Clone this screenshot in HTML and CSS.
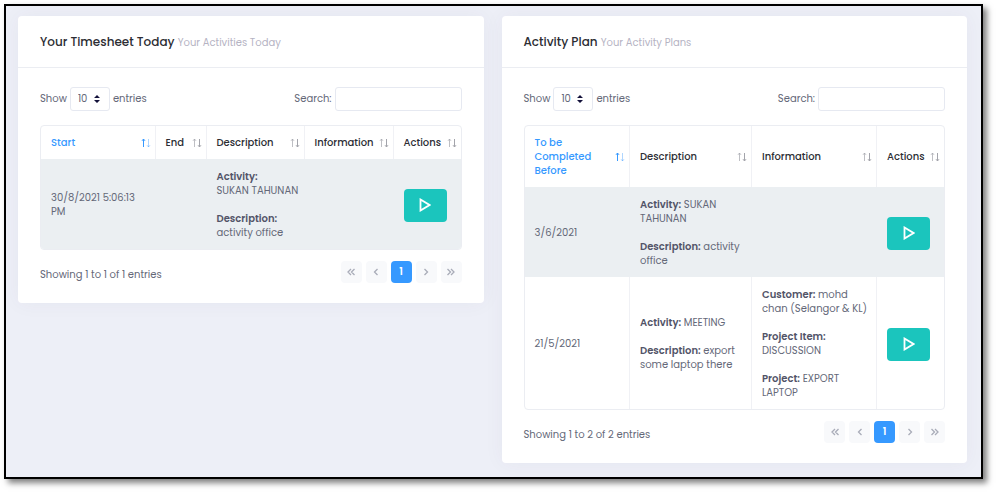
FILE: index.html
```html
<!DOCTYPE html>
<html lang="en">
<head>
    <meta charset="UTF-8">
    <meta name="viewport" content="width=device-width, initial-scale=1.0">
    <title>Timesheet</title>
    <link rel="stylesheet" href="styles.css">
</head>
<body>
    <!-- shared icons -->
    <svg class="icons" width="0" height="0" aria-hidden="true">
        <symbol id="sort" viewBox="0 0 10 10">
            <path class="up" d="M2.5 9V1M1 2.8L2.5 1L4 2.8"/>
            <path class="down" d="M7.5 1V9M6 7.2L7.5 9L9 7.2"/>
        </symbol>
        <symbol id="sort-asc" viewBox="0 0 10 10">
            <path d="M2.5 9V1M1 2.8L2.5 1L4 2.8"/>
            <path d="M7.5 1V9M6 7.2L7.5 9L9 7.2" opacity="0.4"/>
        </symbol>
        <symbol id="play" viewBox="0 0 12 14">
            <path d="M1.5 1.5L10.5 7L1.5 12.5Z" fill="none" stroke="#fff" stroke-width="1.8"/>
        </symbol>
        <symbol id="caret" viewBox="0 0 6 8">
            <path d="M3 0L6 3H0ZM3 8L0 5H6Z" fill="#13113a"/>
        </symbol>
        <symbol id="prev" viewBox="0 0 10 10">
            <path d="M6.5 2L3.5 5L6.5 8"/>
        </symbol>
        <symbol id="next" viewBox="0 0 10 10">
            <path d="M3.5 2L6.5 5L3.5 8"/>
        </symbol>
        <symbol id="first" viewBox="0 0 10 10">
            <path d="M5 2L2 5L5 8M8.5 2L5.5 5L8.5 8"/>
        </symbol>
        <symbol id="last" viewBox="0 0 10 10">
            <path d="M1.5 2L4.5 5L1.5 8M5 2L8 5L5 8"/>
        </symbol>
    </svg>

    <main class="frame">
        <section class="card">
            <header class="card-header">
                <h2>Your Timesheet Today <small>Your Activities Today</small></h2>
            </header>
            <div class="card-body">
                <div class="controls">
                    <label class="length">Show
                        <span class="select">
                            <select name="timesheet_length">
                                <option>10</option>
                                <option>25</option>
                                <option>50</option>
                            </select>
                            <svg><use href="#caret"/></svg>
                        </span>
                        entries
                    </label>
                    <label class="search">Search: <input type="search" name="timesheet_search"></label>
                </div>
                <table class="timesheet">
                    <thead>
                        <tr>
                            <th class="sorted"><div>Start <svg><use href="#sort-asc"/></svg></div></th>
                            <th><div>End <svg><use href="#sort"/></svg></div></th>
                            <th><div>Description <svg><use href="#sort"/></svg></div></th>
                            <th><div>Information <svg><use href="#sort"/></svg></div></th>
                            <th><div>Actions <svg><use href="#sort"/></svg></div></th>
                        </tr>
                    </thead>
                    <tbody>
                        <tr>
                            <td>30/8/2021 5:06:13<br>PM</td>
                            <td></td>
                            <td><b>Activity:</b><br>SUKAN TAHUNAN<br><br><b>Description:</b><br>activity office</td>
                            <td></td>
                            <td><button type="button" class="play" aria-label="Start"><svg><use href="#play"/></svg></button></td>
                        </tr>
                    </tbody>
                </table>
                <div class="table-footer">
                    <span>Showing 1 to 1 of 1 entries</span>
                    <nav class="pages">
                        <button type="button" aria-label="First" disabled><svg><use href="#first"/></svg></button>
                        <button type="button" aria-label="Previous" disabled><svg><use href="#prev"/></svg></button>
                        <button type="button" class="active">1</button>
                        <button type="button" aria-label="Next" disabled><svg><use href="#next"/></svg></button>
                        <button type="button" aria-label="Last" disabled><svg><use href="#last"/></svg></button>
                    </nav>
                </div>
            </div>
        </section>

        <section class="card">
            <header class="card-header">
                <h2>Activity Plan <small>Your Activity Plans</small></h2>
            </header>
            <div class="card-body">
                <div class="controls">
                    <label class="length">Show
                        <span class="select">
                            <select name="plan_length">
                                <option>10</option>
                                <option>25</option>
                                <option>50</option>
                            </select>
                            <svg><use href="#caret"/></svg>
                        </span>
                        entries
                    </label>
                    <label class="search">Search: <input type="search" name="plan_search"></label>
                </div>
                <table class="plan">
                    <thead>
                        <tr>
                            <th class="sorted"><div>To be Completed Before <svg><use href="#sort-asc"/></svg></div></th>
                            <th><div>Description <svg><use href="#sort"/></svg></div></th>
                            <th><div>Information <svg><use href="#sort"/></svg></div></th>
                            <th><div>Actions <svg><use href="#sort"/></svg></div></th>
                        </tr>
                    </thead>
                    <tbody>
                        <tr>
                            <td>3/6/2021</td>
                            <td><b>Activity:</b> SUKAN<br>TAHUNAN<br><br><b>Description:</b> activity<br>office</td>
                            <td></td>
                            <td><button type="button" class="play" aria-label="Start"><svg><use href="#play"/></svg></button></td>
                        </tr>
                        <tr>
                            <td>21/5/2021</td>
                            <td><b>Activity:</b> MEETING<br><br><b>Description:</b> export<br>some laptop there</td>
                            <td><b>Customer:</b> mohd<br>chan (Selangor &amp; KL)<br><br><b>Project Item:</b><br>DISCUSSION<br><br><b>Project:</b> EXPORT<br>LAPTOP</td>
                            <td><button type="button" class="play" aria-label="Start"><svg><use href="#play"/></svg></button></td>
                        </tr>
                    </tbody>
                </table>
                <div class="table-footer">
                    <span>Showing 1 to 2 of 2 entries</span>
                    <nav class="pages">
                        <button type="button" aria-label="First" disabled><svg><use href="#first"/></svg></button>
                        <button type="button" aria-label="Previous" disabled><svg><use href="#prev"/></svg></button>
                        <button type="button" class="active">1</button>
                        <button type="button" aria-label="Next" disabled><svg><use href="#next"/></svg></button>
                        <button type="button" aria-label="Last" disabled><svg><use href="#last"/></svg></button>
                    </nav>
                </div>
            </div>
        </section>
    </main>
</body>
</html>
```

FILE: styles.css
```css
* {
    box-sizing: border-box;
}
body {
    margin: 0;
    padding: 4px 13px 13px 4px;
    font-family: Poppins, Inter, sans-serif;
    font-size: 10px;
    line-height: 14px;
    color: #646878;
    background-color: #fff;
}
.icons {
    position: absolute;
}
.frame {
    display: flex;
    align-items: flex-start;
    gap: 18px;
    padding: 10px 14px 14px 12px;
    border: 2px solid #000;
    background-color: #edeff7;
    box-shadow: 4px 4px 6px rgba(0, 0, 0, 0.5);
}
.card {
    flex: 1;
    min-width: 0;
    background-color: #fff;
    border-radius: 4px;
    box-shadow: 0 0 20px rgba(82, 63, 105, 0.05);
}
.card-header {
    padding: 16px 22px 15px;
    border-bottom: 1px solid #ebedf2;
}
h2 {
    margin: 0;
    font-size: 12px;
    line-height: 20px;
    font-weight: 500;
    color: #2c2d33;
}
h2 small {
    font-size: 10px;
    font-weight: 400;
    color: #b5b3c3;
}
.card-body {
    padding: 19px 22px 20px;
}
.controls {
    display: flex;
    justify-content: space-between;
    margin-bottom: 14px;
}
.length,
.search {
    display: flex;
    align-items: center;
    gap: 3px;
}
.select {
    position: relative;
}
.select select {
    display: block;
    appearance: none;
    width: 40px;
    height: 24px;
    padding: 0 7px;
    border: 1px solid #e6e9f1;
    border-radius: 3px;
    background-color: #fff;
    font: inherit;
    color: #646878;
}
.select svg {
    position: absolute;
    top: 8px;
    right: 10px;
    width: 6px;
    height: 8px;
    pointer-events: none;
}
.search input {
    width: 127px;
    height: 24px;
    padding: 0 8px;
    border: 1px solid #e6e9f1;
    border-radius: 3px;
    font: inherit;
}
.card-header {
    padding-bottom: 14px;
}
table {
    width: 100%;
    table-layout: fixed;
    border-collapse: separate;
    border-spacing: 0;
    border: 1px solid #ebedf2;
    border-radius: 4px;
    overflow: hidden;
}
th,
td {
    padding: 11px 4px 9px 10px;
    border-right: 1px solid #f0f1f5;
    text-align: left;
    vertical-align: middle;
}
th:last-child,
td:last-child {
    border-right: none;
}
th {
    padding-top: 10px;
    font-weight: 500;
    color: #2c2d33;
}
th div {
    display: flex;
    align-items: center;
    justify-content: space-between;
}
th svg {
    flex: none;
    width: 10px;
    height: 10px;
    fill: none;
    stroke: #a3a4ab;
}
.up {
    opacity: 0.7;
}
.sorted {
    color: #3699ff;
}
.sorted svg {
    stroke: #3699ff;
}
tbody tr:nth-child(odd) td {
    background-color: #ebeff2;
    border-right-color: #ebeff2;
}
b {
    font-weight: 600;
    color: #525468;
}
.timesheet th:nth-child(2) {
    width: 51px;
}
.timesheet th:nth-child(3) {
    width: 98px;
}
.timesheet th:nth-child(4) {
    width: 89px;
}
.plan th:nth-child(2) {
    width: 122px;
}
.plan th:nth-child(3) {
    width: 125px;
}
.timesheet th:last-child,
.plan th:last-child {
    width: 67px;
}
.play {
    display: flex;
    align-items: center;
    justify-content: center;
    width: 43px;
    height: 33px;
    padding: 0;
    border: none;
    border-radius: 4px;
    background-color: #1bc5bd;
    cursor: pointer;
}
.play svg {
    width: 12px;
    height: 14px;
}
.table-footer {
    display: flex;
    align-items: center;
    justify-content: space-between;
    padding-top: 11px;
}
.table-footer span {
    padding-top: 6px;
}
.pages {
    display: flex;
    gap: 4px;
}
.pages button {
    display: flex;
    align-items: center;
    justify-content: center;
    width: 21px;
    height: 22px;
    padding: 0;
    border: none;
    border-radius: 4px;
    background-color: #f8f9fb;
    font: inherit;
    font-weight: 600;
}
.pages svg {
    width: 10px;
    height: 10px;
    fill: none;
    stroke: #a9acb8;
    stroke-width: 1.3;
}
.pages .active {
    background-color: #3699ff;
    color: #fff;
}
```
